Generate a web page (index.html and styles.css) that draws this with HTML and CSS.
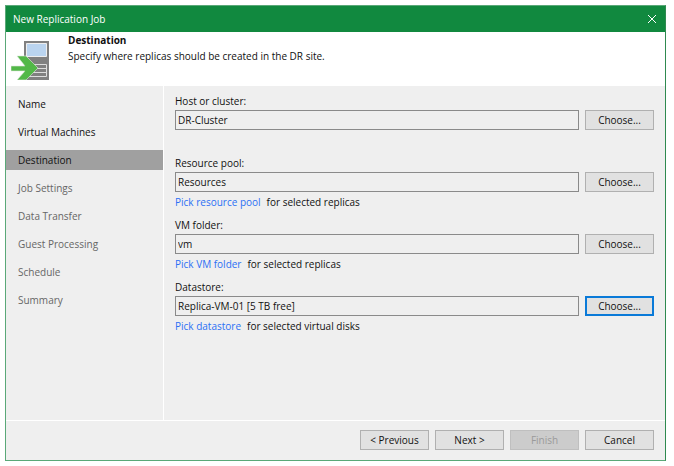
FILE: index.html
```html
<!DOCTYPE html>
<html lang="en">
<head>
  <meta charset="UTF-8" />
  <meta name="viewport" content="width=device-width, initial-scale=1.0" />
  <title>New Replication Job</title>
  <link rel="stylesheet" href="styles.css">
</head>
<body>
  <div class="wizard">
    <div class="title-bar">
      <span>New Replication Job</span>
      <button class="close-button" type="button" aria-label="Close">
        <svg width="10" height="10" viewBox="0 0 10 10"><path d="M1 1l8 8M9 1l-8 8" /></svg>
      </button>
    </div>

    <header class="header">
      <svg class="header-icon" width="40" height="40" viewBox="0 0 40 40">
        <path fill="#808080" d="M13 1h25v39H13z" />
        <path fill="#bad4ef" stroke="#eee" d="M15.500 3.500h20v13h-20z" />
        <path fill="none" stroke="#ddd" d="M17 24.500h18.500v12H17M17 28.500h18.500M17 32.500h18.500" />
        <path fill="#52b848" stroke="#dfe8dd" stroke-width=".6" d="M6 16h9l12 12-12 12H6l8-9H0v-5h14z" />
      </svg>
      <div>
        <h1>Destination</h1>
        <p>Specify where replicas should be created in the DR site.</p>
      </div>
    </header>

    <div class="content">
      <nav class="steps">
        <a class="step" href="#">Name</a>
        <a class="step" href="#">Virtual Machines</a>
        <a class="step active" href="#">Destination</a>
        <a class="step pending" href="#">Job Settings</a>
        <a class="step pending" href="#">Data Transfer</a>
        <a class="step pending" href="#">Guest Processing</a>
        <a class="step pending" href="#">Schedule</a>
        <a class="step pending" href="#">Summary</a>
      </nav>

      <main class="form">
        <div class="field">
          <label for="host">Host or cluster:</label>
          <input id="host" type="text" value="DR-Cluster" readonly />
          <button class="button" type="button">Choose...</button>
        </div>
        <div class="field">
          <label for="pool">Resource pool:</label>
          <input id="pool" type="text" value="Resources" readonly />
          <button class="button" type="button">Choose...</button>
          <p class="hint"><a href="#">Pick resource pool</a><span>for selected replicas</span></p>
        </div>
        <div class="field">
          <label for="folder">VM folder:</label>
          <input id="folder" type="text" value="vm" readonly />
          <button class="button" type="button">Choose...</button>
          <p class="hint"><a href="#">Pick VM folder</a><span>for selected replicas</span></p>
        </div>
        <div class="field">
          <label for="datastore">Datastore:</label>
          <input id="datastore" type="text" value="Replica-VM-01 [5 TB free]" readonly />
          <button class="button focused" type="button">Choose...</button>
          <p class="hint"><a href="#">Pick datastore</a><span>for selected virtual disks</span></p>
        </div>
      </main>
    </div>

    <footer class="footer">
      <button class="button" type="button">&lt; Previous</button>
      <button class="button" type="button">Next &gt;</button>
      <button class="button" type="button" disabled>Finish</button>
      <button class="button" type="button">Cancel</button>
    </footer>
  </div>
</body>
</html>
```
FILE: styles.css
```css
* {
  margin: 0;
  padding: 0;
  box-sizing: border-box;
}
body {
  display: flex;
  min-height: 100vh;
  padding: 5px 8px 5px 5px;
  background: #fff;
  color: #111;
  font-family: 'Segoe UI', 'Open Sans', sans-serif;
  font-size: 10px;
  line-height: 16px;
}
button,
input {
  font: inherit;
  color: inherit;
}
a {
  text-decoration: none;
}
/* Window */
.wizard {
  flex: 1;
  display: flex;
  flex-direction: column;
  border: 1px solid #5aa878;
  border-right-color: #2f8a50;
  background: #efefef;
}
.title-bar {
  display: flex;
  justify-content: space-between;
  align-items: center;
  height: 26px;
  padding: 0 8px 0 7px;
  background: #11893f;
  color: #fff;
}
.close-button {
  display: flex;
  border: none;
  background: none;
}
.close-button svg {
  fill: none;
  stroke: #fff;
}
/* Header */
.header {
  display: flex;
  gap: 17px;
  height: 54px;
  padding: 0 5px;
  background: #fff;
}
.header-icon {
  margin-top: 8px;
}
.header h1 {
  font-size: 10px;
  line-height: 16px;
  font-weight: 700;
}
/* Steps and form */
.content {
  flex: 1;
  display: flex;
}
.steps {
  display: flex;
  flex-direction: column;
  gap: 8px;
  width: 158px;
  padding-top: 8px;
  border-right: 1px solid #fff;
}
.step {
  padding: 0 12px;
  line-height: 20px;
  color: #111;
}
.step.active {
  background: #a0a0a0;
}
.step.pending {
  color: #666;
}
.form {
  flex: 1;
  display: flex;
  flex-direction: column;
  gap: 4px;
  padding: 6px 11px;
}
.field {
  display: grid;
  grid-template-columns: 1fr 69px;
  grid-template-rows: 18px 20px 20px;
  column-gap: 6px;
}
.field label {
  grid-column: 1 / -1;
  line-height: 18px;
}
.field input {
  min-width: 0;
  padding: 0 2px;
  border: 1px solid #8a8a8a;
  background: #efefef;
}
.hint {
  grid-column: 1 / -1;
  display: flex;
  gap: 6px;
  line-height: 20px;
}
.hint a {
  color: #2b70f5;
}
/* Buttons */
.button {
  width: 69px;
  height: 20px;
  border: 1px solid #b0b0b0;
  background: #e1e1e1;
  line-height: 16px;
}
.button.focused {
  border: 2px solid #0a7ad8;
}
.button:disabled {
  border-color: #bfbfbf;
  background: #cccccc;
  color: #9a9a9a;
}
.footer {
  display: flex;
  justify-content: flex-end;
  gap: 6px;
  padding: 9px 11px 10px;
  border-top: 1px solid #fff;
}
```
